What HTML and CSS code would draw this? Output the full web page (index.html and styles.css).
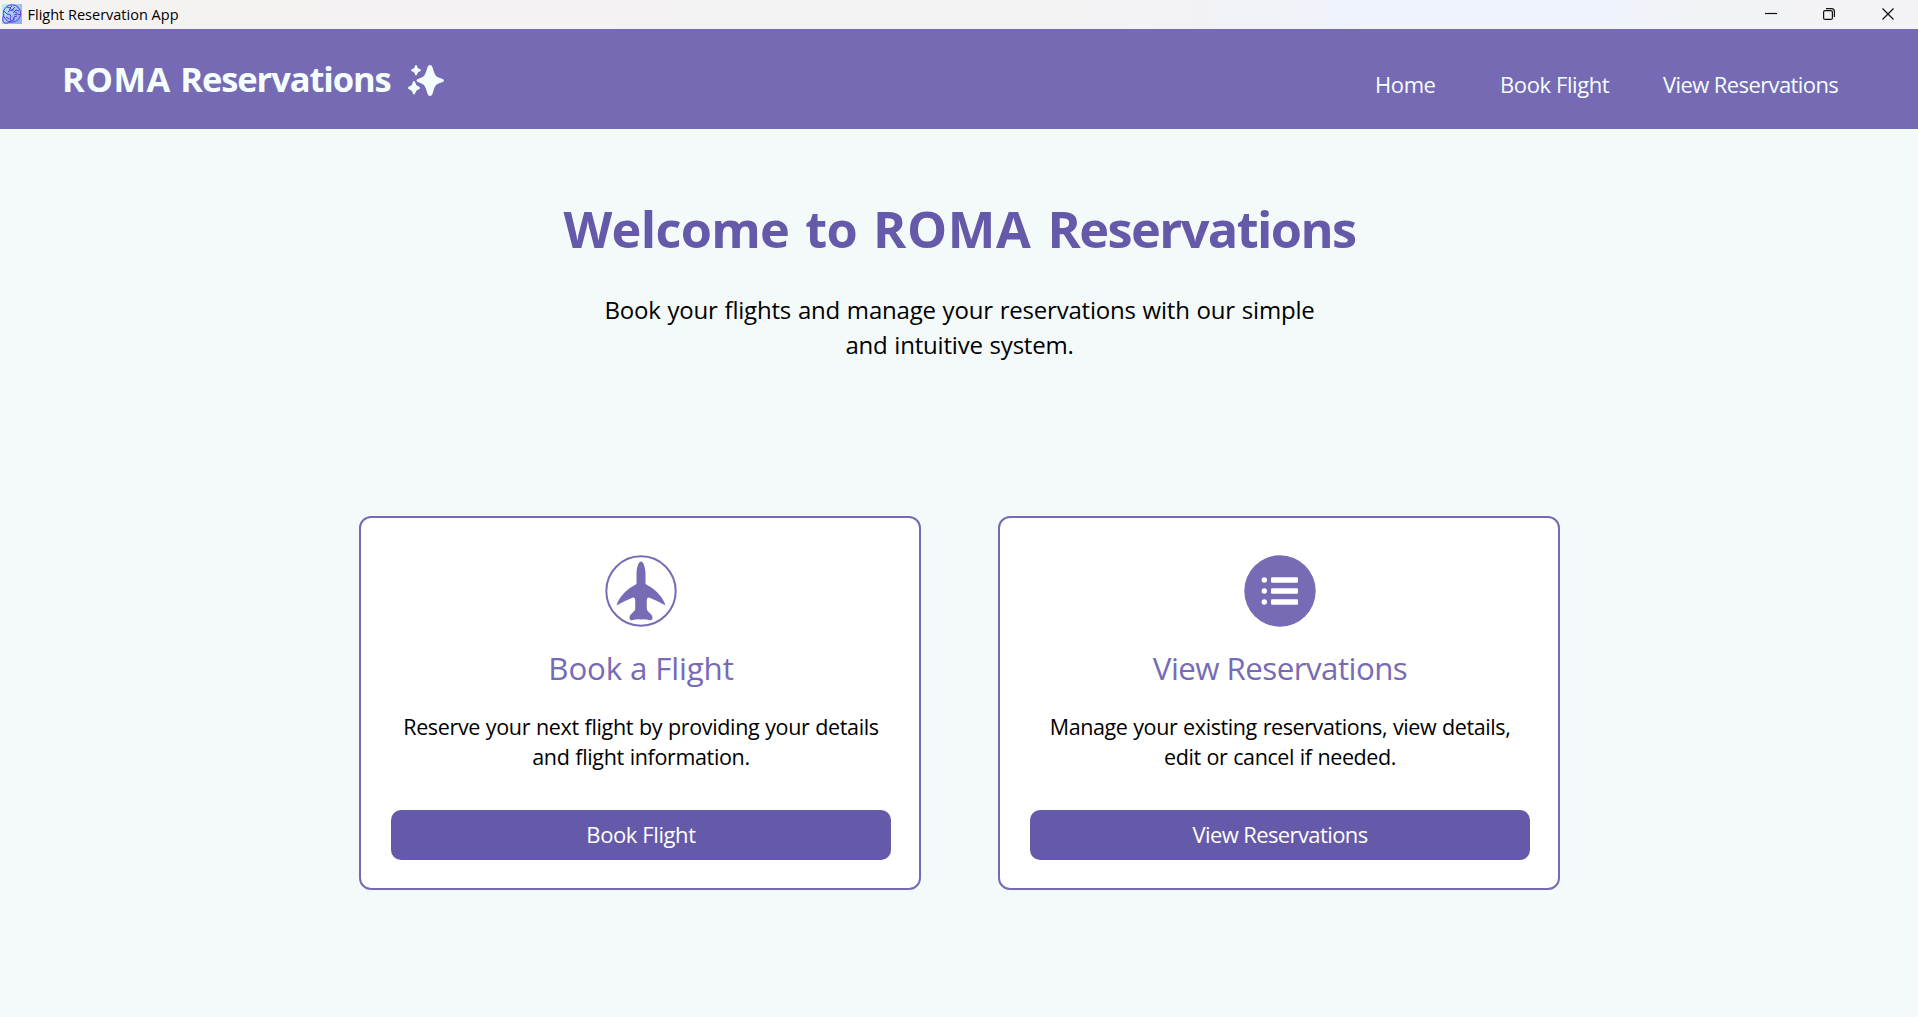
FILE: index.html
```html
<!DOCTYPE html>
<html lang="en">
<head>
<meta charset="utf-8">
<title>Flight Reservation App</title>
<link rel="stylesheet" href="styles.css">
</head>
<body>
<div class="titlebar">
  <svg class="app-icon" width="20" height="20" viewBox="0 0 20 20">
    <defs><linearGradient id="g" x1="0" y1="0" x2="1" y2="0.6"><stop offset="0" stop-color="#b9f3e4"/><stop offset="1" stop-color="#8fb0fb"/></linearGradient></defs>
    <rect width="20" height="20" fill="url(#g)"/>
    <g fill="none" stroke="#5a35e0" stroke-width="1">
      <circle cx="10" cy="9.5" r="8.7"/>
      <path d="M1.5 11.5C0 16 1 19.500 4 19.200C7 19 10 17 13 14.500M2 7l3 3 3 .5 1 2-1 2 1 3M5 3l3 1 2-2M7 6l2-2M9 7l4-4M6 8l3-2 3 0M11 9l3-3 3 1M12 11l3-1 3 .5M11 17l1-4 3-1M13 8l2 1M4 13l3 2"/>
    </g>
  </svg>
  <span class="app-name">Flight Reservation App</span>
  <svg class="window-controls" width="130" height="14" viewBox="0 0 130 14" fill="none" stroke="#111" stroke-width="1.2">
    <path d="M0 6.500H12"/>
    <rect x="58.600" y="3.600" width="8.800" height="8.800" rx="1.500"/>
    <path d="M61 1.600H66.500Q69.400 1.600 69.400 4.500V10"/>
    <path d="M117.500 1.500L128.500 12.500M128.500 1.500L117.500 12.500"/>
  </svg>
</div>
<header class="header">
  <div class="brand">
    <span class="brand-name"><span class="brand-roma">ROMA</span> Reservations</span>
    <svg class="sparkle" width="36" height="32" viewBox="0 0 36 32" fill="#f4feff">
      <path d="M22 0Q23.800 0 24.500 2.200Q26.500 9.500 28.300 11.200Q30 12.600 34 13.800Q36 14.500 36 15.500T34 17.200Q30 18.400 28.300 19.800Q26.500 21.500 24.500 28.800Q23.800 31 22 31T19.500 28.800Q17.500 21.500 15.700 19.800Q14 18.400 10.500 17.200Q8.500 16.500 8.500 15.500T10.500 13.800Q14 12.600 15.700 11.200Q17.500 9.500 19.500 2.200Q20.200 0 22 0Z"/>
      <path d="M8 0Q9 0 9.300 2Q9.700 3.400 11.500 4Q13 4.400 13 5.200T11.500 6.400Q9.700 7 9.300 8.400Q9 10.400 8 10.400T6.700 8.400Q6.300 7 4.500 6.400Q3 6 3 5.200T4.500 4Q6.300 3.400 6.700 2Q7 0 8 0Z"/>
      <path d="M6 16Q7 16 7.500 18.200Q8 20.500 10.300 21.300Q12 22 12 23T10.300 24.500Q8 25.300 7.500 27.500Q7 29.500 6 29.500T4.500 27.500Q4 25.300 1.700 24.500Q0 24 0 23T1.700 21.300Q4 20.500 4.500 18.200Q5 16 6 16Z"/>
    </svg>
  </div>
  <nav class="nav">
    <a class="nav-home">Home</a>
    <a class="nav-book">Book Flight</a>
    <a class="nav-view">View Reservations</a>
  </nav>
</header>
<main class="main">
  <h1 class="welcome">Welcome to <span class="welcome-roma">ROMA</span> <span class="welcome-last">Reservations</span></h1>
  <p class="intro">Book your flights and manage your reservations with our simple<br>and intuitive system.</p>
  <div class="cards">
    <section class="card">
      <svg class="card-icon" width="72" height="72" viewBox="0 0 72 72">
        <circle cx="36" cy="36" r="34.700" fill="#fff" stroke="#776bb6" stroke-width="2"/>
        <path fill="#776bb6" d="M36 6.500C38.500 6.500 40.500 13 40.500 19V29C48 33 57.500 40 60.500 50.500Q53 46 44 42.500Q42 42 41.800 45V54C42 57 47.500 59 47.500 62.500Q47.500 65.500 45 65.300Q40 64 36 64.500Q32 64 27 65.300Q24.500 65.500 24.500 62.500C24.500 59 30 57 30.200 54V45Q30 42 28 42.500Q19 46 11.500 50.500C14.500 40 24 33 31.500 29V19C31.500 13 33.500 6.500 36 6.500Z"/>
      </svg>
      <h2 class="card-title">Book a Flight</h2>
      <p class="card-text">Reserve your next flight by providing your details<br>and flight information.</p>
      <button class="card-button">Book Flight</button>
    </section>
    <section class="card card-manage">
      <svg class="card-icon" width="72" height="72" viewBox="0 0 72 72">
        <circle cx="36" cy="36" r="35.700" fill="#776bb6"/>
        <g fill="#fff">
          <circle cx="20.300" cy="25" r="2.700"/><circle cx="20.300" cy="36" r="2.700"/><circle cx="20.300" cy="47" r="2.700"/>
          <rect x="27" y="22.300" width="27" height="5.400" rx="1.200"/><rect x="27" y="33.300" width="27" height="5.400" rx="1.200"/><rect x="27" y="44.300" width="27" height="5.400" rx="1.200"/>
        </g>
      </svg>
      <h2 class="card-title">View Reservations</h2>
      <p class="card-text">Manage your existing reservations, view details,<br>edit or cancel if needed.</p>
      <button class="card-button">View Reservations</button>
    </section>
  </div>
</main>
</body>
</html>
```
FILE: styles.css
```css
* { box-sizing: border-box; margin: 0; padding: 0; }
body {
  width: 1918px;
  height: 1017px;
  overflow: hidden;
  background: #f4fafa;
  color: #000;
  font-family: "Open Sans", "Noto Sans", sans-serif;
  white-space: nowrap;
}
.titlebar {
  display: flex;
  height: 29px;
  padding: 0 23px 0 2px;
  background: linear-gradient(90deg, #f5f2f1 0, #f3f2f4 1150px, #eff3fc 1370px, #eff3fc 1590px, #f2f3f6 1700px, #f3f3f5 100%);
}
.app-icon { margin-top: 4px; }
.app-name { margin-left: 5.5px; font-size: 14.5px; line-height: 30px; }
.window-controls { margin: 7px 0 0 auto; }
.header {
  display: flex;
  justify-content: space-between;
  height: 100px;
  padding: 0 80px 0 62px;
  background: #766ab5;
  color: #f4feff;
}
.brand { display: flex; padding-top: 26px; }
.brand-name { width: 346px; font-size: 34.5px; font-weight: 700; line-height: 48px; letter-spacing: -1.1px; word-spacing: 1.5px; }
.brand-roma { letter-spacing: 0.6px; }
.sparkle { margin-top: 10px; }
.nav { display: flex; padding-top: 40px; font-size: 22px; line-height: 30px; letter-spacing: -0.4px; }
.nav-home { width: 125px; }
.nav-book { width: 163px; }
.nav-view { width: 175px; letter-spacing: -0.6px; }
.main { padding: 65px 0 0 1px; text-align: center; }
.welcome { color: #6559a9; font-size: 50.5px; line-height: 70px; letter-spacing: -0.7px; word-spacing: 3.5px; }
.welcome-roma { letter-spacing: 0.7px; }
.welcome-last { letter-spacing: -1.6px; }
.intro { margin-top: 28px; font-size: 24px; line-height: 35px; letter-spacing: -0.2px; word-spacing: 0.8px; }
.cards { display: flex; justify-content: center; gap: 77px; margin-top: 154px; }
.card {
  display: flex;
  flex-direction: column;
  align-items: center;
  width: 562px;
  height: 374px;
  padding: 37px 28px 28px 30px;
  border: 2px solid #766ab5;
  border-radius: 12px;
  background: #fff;
}
.card-title { margin-top: 19px; color: #776bb6; font-size: 31.3px; font-weight: 400; line-height: 44px; letter-spacing: -0.15px; }
.card-text { margin-top: 22px; font-size: 21.5px; line-height: 30px; letter-spacing: -0.35px; word-spacing: 0.6px; }
.card-button {
  width: 500px;
  height: 50px;
  margin-top: 38px;
  padding-bottom: 2px;
  border: 0;
  border-radius: 10px;
  background: #6559a9;
  color: #fff;
  font-family: inherit;
  font-size: 22px;
  line-height: 48px;
  letter-spacing: -0.4px;
}
.card-manage .card-title { letter-spacing: -0.55px; }
.card-manage .card-text { letter-spacing: -0.4px; }
.card-manage .card-button { letter-spacing: -0.6px; }
```
